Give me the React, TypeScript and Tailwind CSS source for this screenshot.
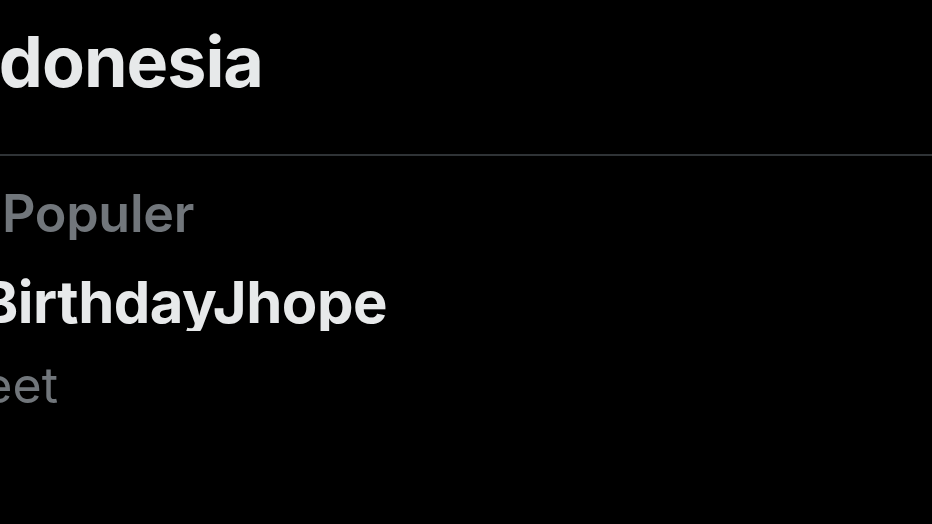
const TREND = {
  header: 'Trending di Indonesia',
  context: 'K-Pop · Populer',
  tag: '#HappyBirthdayJhope',
  count: '1,2 jt Tweet',
};

// Lines are clipped at the left edge of the zoomed screenshot, so each one is
// right-aligned inside a box that ends where the visible text ends.
function Clipped({ width, className, children }: { width: string; className: string; children: string }) {
  return (
    <div className={`flex justify-end overflow-hidden whitespace-nowrap ${width} ${className}`}>
      <span className="shrink-0">{children}</span>
    </div>
  );
}

export default function App() {
  return (
    <div className="h-[524px] w-[932px] overflow-hidden bg-black font-['Inter',sans-serif]">
      <div className="h-[154px] pt-[27px]">
        <Clipped width="w-[263px]" className="text-[70px] font-bold leading-none tracking-[-1px] text-[#e7e9ea]">
          {TREND.header}
        </Clipped>
      </div>
      <div className="h-[2px] bg-[#2f3336]" />

      <div className="pt-[32px]">
        <Clipped width="w-[194px]" className="text-[52px] font-semibold leading-none tracking-[-0.3px] text-[#71767b]">
          {TREND.context}
        </Clipped>
        <Clipped width="w-[387px]" className="mt-[33px] text-[58px] font-bold leading-none tracking-[-0.5px] text-[#e7e9ea]">
          {TREND.tag}
        </Clipped>
        <Clipped width="w-[58px]" className="mt-[29px] text-[50px] font-normal leading-none text-[#71767b]">
          {TREND.count}
        </Clipped>
      </div>
    </div>
  );
}
